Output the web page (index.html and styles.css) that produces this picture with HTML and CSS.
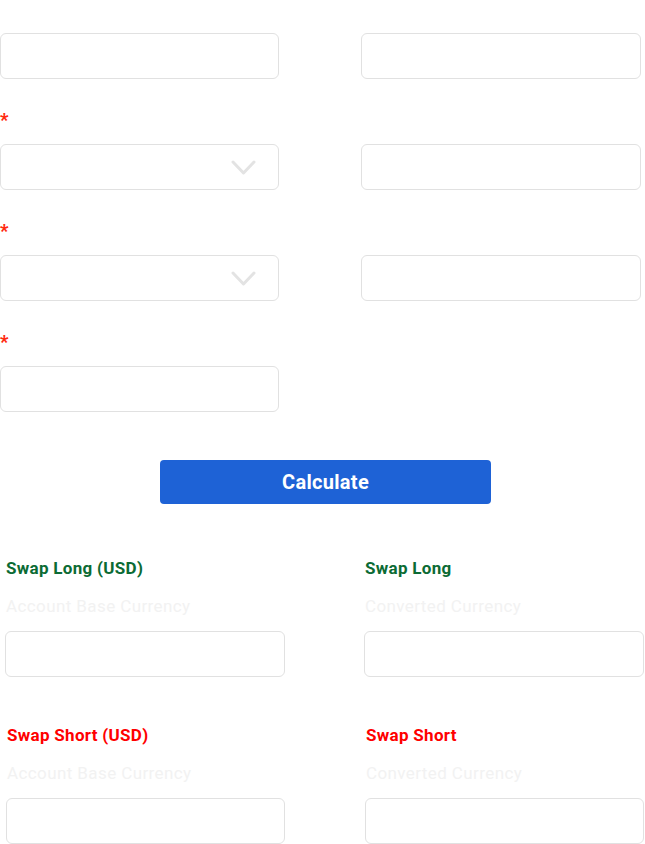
FILE: index.html
```html
<!DOCTYPE html>
<html lang="en">
<head>
<meta charset="utf-8">
<title>Swap Calculator</title>
<link rel="stylesheet" href="styles.css">
</head>
<body>
<form class="calc">
  <div class="grid">
    <div class="field">
      <div class="label"></div>
      <div class="input"></div>
    </div>
    <div class="field">
      <div class="label"></div>
      <div class="input"></div>
    </div>
    <div class="field">
      <div class="label"><span class="req">*</span></div>
      <div class="input select">
        <svg class="chev" width="25" height="16" viewBox="0 0 25 16"><path d="M2 2 L12.5 13 L23 2" fill="none" stroke="#e3e3e3" stroke-width="3" stroke-linecap="round" stroke-linejoin="round"/></svg>
      </div>
    </div>
    <div class="field">
      <div class="label"></div>
      <div class="input"></div>
    </div>
    <div class="field">
      <div class="label"><span class="req">*</span></div>
      <div class="input select">
        <svg class="chev" width="25" height="16" viewBox="0 0 25 16"><path d="M2 2 L12.5 13 L23 2" fill="none" stroke="#e3e3e3" stroke-width="3" stroke-linecap="round" stroke-linejoin="round"/></svg>
      </div>
    </div>
    <div class="field">
      <div class="label"></div>
      <div class="input"></div>
    </div>
    <div class="field">
      <div class="label"><span class="req">*</span></div>
      <div class="input"></div>
    </div>
  </div>
  <div class="actions">
    <button type="button" class="btn">Calculate</button>
  </div>
</form>

<section class="results">
  <div class="res">
    <div class="title long">Swap Long (USD)</div>
    <div class="sub">Account Base Currency</div>
    <div class="input"></div>
  </div>
  <div class="res">
    <div class="title long">Swap Long</div>
    <div class="sub">Converted Currency</div>
    <div class="input"></div>
  </div>
  <div class="res shift">
    <div class="title short">Swap Short (USD)</div>
    <div class="sub">Account Base Currency</div>
    <div class="input"></div>
  </div>
  <div class="res shift">
    <div class="title short">Swap Short</div>
    <div class="sub">Converted Currency</div>
    <div class="input"></div>
  </div>
</section>
</body>
</html>
```

FILE: styles.css
```css
* { box-sizing: border-box; }

body {
  margin: 0;
  background: #ffffff;
  font-family: Roboto, "Noto Sans", "Liberation Sans", sans-serif;
  overflow: hidden;
}

.calc {
  margin: 0;
}

.grid {
  display: grid;
  grid-template-columns: 279px 280px;
  column-gap: 82px;
  row-gap: 32px;
}

.field {
  display: flex;
  flex-direction: column;
}

.label {
  height: 33px;
  font-size: 16px;
  line-height: 16px;
}

.req {
  color: #ff2a10;
  font-weight: 900;
  font-size: 18px;
  line-height: 16px;
  display: inline-block;
  margin-top: 1px;
}

.input {
  height: 46px;
  border: 1px solid #e1e1e1;
  border-radius: 6px;
  background: #fff;
}

.select {
  display: flex;
  align-items: center;
  justify-content: flex-end;
  padding-right: 22px;
}

.chev {
  display: block;
  margin-top: 1px;
}

.actions {
  display: flex;
  justify-content: center;
  padding-left: 6px;
  margin-top: 48px;
}

.btn {
  width: 331px;
  height: 44px;
  border: 0;
  border-radius: 4px;
  background: #1e62d6;
  color: #ffffff;
  font-family: inherit;
  font-size: 20px;
  font-weight: 700;
  letter-spacing: 0.3px;
}

.results {
  display: grid;
  grid-template-columns: 280px 280px;
  column-gap: 79px;
  row-gap: 48px;
  padding-left: 5px;
  margin-top: 54px;
}

.res {
  display: flex;
  flex-direction: column;
}

.res.shift {
  margin-left: 1px;
}

.title {
  font-size: 17px;
  font-weight: 700;
  line-height: 20px;
  letter-spacing: 0.3px;
  padding-left: 1px;
}

.title.long { color: #0b6b34; }
.title.short { color: #ff0000; }

.sub {
  margin-top: 18px;
  font-size: 17px;
  line-height: 20px;
  letter-spacing: 0.4px;
  color: #f2f2f2;
  padding-left: 1px;
}

.res .input {
  margin-top: 15px;
}
```
